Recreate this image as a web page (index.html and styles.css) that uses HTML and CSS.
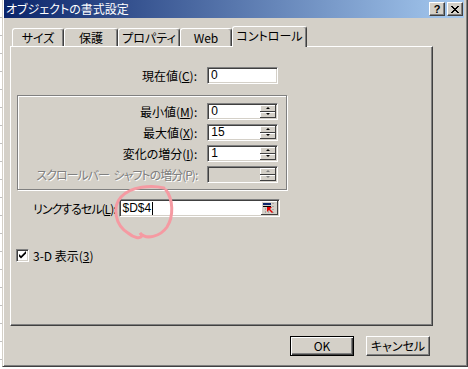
FILE: index.html
```html
<html>
<head>
<title>オブジェクトの書式設定</title>
<meta charset="utf-8">
<link rel="stylesheet" href="styles.css">
</head>
<body>
<div class="desk">
<div class="dialog">
<div class="titlebar">
<span class="title">オブジェクトの書式設定</span>
<span class="tbtn help">?</span>
<span class="tbtn close"><svg width="8" height="7" viewBox="0 0 8 7"><path d="M0 0L7 7M1 0L8 7M7 0L0 7M8 0L1 7" stroke="#000" stroke-width="1"/></svg></span>
</div>
<div class="sheet">
<div class="tabs">
<div class="tab t1">サイズ</div>
<div class="tab t2">保護</div>
<div class="tab t3">プロパティ</div>
<div class="tab t4">Web</div>
<div class="tab active">コントロール</div>
</div>
<div class="panel">
<div class="row top">
<label class="lbl">現在値(<u>C</u>):</label>
<div class="field"><span class="val">0</span></div>
</div>
<div class="group">
<div class="row">
<label class="lbl">最小値(<u>M</u>):</label>
<div class="field"><span class="val">0</span><span class="spin"><span class="sb"><i class="up"></i></span><span class="sb"><i class="dn"></i></span></span></div>
</div>
<div class="row">
<label class="lbl">最大値(<u>X</u>):</label>
<div class="field"><span class="val">15</span><span class="spin"><span class="sb"><i class="up"></i></span><span class="sb"><i class="dn"></i></span></span></div>
</div>
<div class="row">
<label class="lbl">変化の増分(<u>I</u>):</label>
<div class="field"><span class="val">1</span><span class="spin"><span class="sb"><i class="up"></i></span><span class="sb"><i class="dn"></i></span></span></div>
</div>
<div class="row">
<label class="lbl off">スクロールバー シャフトの増分(P):</label>
<div class="field disabled"><span class="val"></span><span class="spin"><span class="sb"><i class="up"></i></span><span class="sb"><i class="dn"></i></span></span></div>
</div>
</div>
<div class="row link">
<label class="lbl2 tight">リンクするセル(<u>L</u>):</label>
<div class="field wide"><span class="val">$D$4<b class="caret"></b></span><span class="refbtn"><svg width="13" height="11" viewBox="0 0 13 11"><rect x="1" y="1" width="8" height="2" fill="#0a246a"/><rect x="1" y="4" width="8" height="1" fill="#000"/><path d="M11 1v1M11 4v1M11 7v1M11 10v1M3 7h1M3 10h1M6 10h1" stroke="#808080"/><path d="M5 5l5 0-2 2 3 3-1 1-3-3-2 2z" fill="#e00000"/></svg></span></div>
</div>
<div class="row check">
<span class="cbox"><svg width="9" height="9" viewBox="0 0 9 9"><path d="M1 3l2 2 5-5v2.5l-5 5-2-2z" fill="#000"/></svg></span>
<label class="lbl2">3-D 表示(<u>3</u>)</label>
</div>
</div>
<div class="actions">
<div class="btn def">OK</div>
<div class="btn">キャンセル</div>
</div>
</div>
</div>
<svg class="scribble" width="468" height="369" viewBox="0 0 468 369"><path d="M164 188C152 185 131 186 121 197C112 207 115 225 128 233C134 238 140 239 142 236L140 233C146 240 160 237 167 227C174 216 173 199 166 190" fill="none" stroke="#f59aa2" stroke-width="3" stroke-linecap="round"/></svg>
</div>
</body>
</html>
```
FILE: styles.css
```css
body{margin:0;background:#fff;font-family:"Noto Sans CJK JP","Liberation Sans",sans-serif;font-size:12px;font-feature-settings:"palt";color:#000;}
.desk{position:relative;width:468px;height:369px;overflow:hidden;background:repeating-linear-gradient(180deg,#fff 0,#fff 17px,#c0c0c0 17px,#c0c0c0 18px);}
.dialog{width:466px;height:367px;margin-left:2px;box-sizing:border-box;background:#d4d0c8;border-style:solid;border-width:0 1px 1px 1px;border-color:#d4d0c8 #404040 #404040 #d4d0c8;box-shadow:inset 1px 0 #fff,inset -1px -1px #808080;padding:0 3px 0 1px;}
.titlebar{height:18px;display:flex;align-items:center;background:linear-gradient(90deg,#0a246a 0%,#a6caf0 100%);}
.title{flex:1;color:#fff;padding-left:2px;line-height:18px;}
.tbtn{width:16px;height:14px;box-sizing:border-box;background:#d4d0c8;border:1px solid;border-color:#fff #404040 #404040 #fff;box-shadow:inset -1px -1px #808080;display:flex;align-items:center;justify-content:center;}
.help{margin-right:2px;font:bold 11px "Liberation Sans",sans-serif;}
.close{margin-right:1px;}
.sheet{padding:8px 0 0 6px;}
.tabs{display:flex;align-items:flex-end;height:20px;padding-left:2px;}
.tab{height:18px;box-sizing:border-box;border-top:1px solid #fff;border-left:1px solid #fff;border-right:1px solid #404040;box-shadow:inset -1px 0 #808080;border-radius:3px 3px 0 0;text-align:center;line-height:17px;}
.t1{width:52px;}
.t2{width:54px;}
.t3{width:62px;}
.t4{width:52px;}
.tab.active{width:75px;height:21px;margin-bottom:-1px;position:relative;z-index:1;background:#d4d0c8;line-height:18px;}
.panel{width:423px;height:280px;box-sizing:border-box;border:1px solid;border-color:#fff #404040 #404040 #fff;box-shadow:inset -1px -1px #808080;padding-top:20px;}
.row{display:flex;align-items:center;height:17px;}
.lbl{text-align:right;white-space:pre;margin-right:10px;}
.top .lbl{width:186px;}
.group .lbl{width:179px;}
.off{color:#808080;text-shadow:1px 1px #fff;letter-spacing:-1px;word-spacing:3px;}
.field{width:71px;height:17px;box-sizing:border-box;display:flex;background:#fff;border:1px solid;border-color:#808080 #fff #fff #808080;box-shadow:inset 1px 1px #404040,inset -1px -1px #d4d0c8;padding:1px;}
.val{flex:1;padding-left:2px;line-height:13px;display:flex;align-items:center;font-family:"Liberation Sans",sans-serif;}
.spin{width:16px;display:flex;flex-direction:column;}
.sb{flex:1;background:#d4d0c8;border-right:1px solid #404040;border-bottom:1px solid #404040;box-shadow:inset 1px 1px #fff;display:flex;align-items:center;justify-content:center;}
.sb i{width:0;height:0;border-left:2px solid transparent;border-right:2px solid transparent;}
.sb .up{border-bottom:2px solid #000;}
.sb .dn{border-top:2px solid #000;}
.disabled{background:#d4d0c8;}
.disabled .sb .up{border-bottom-color:#808080;}
.disabled .sb .dn{border-top-color:#808080;}
.group{width:270px;height:95px;box-sizing:border-box;margin:11px 0 0 6px;border:1px solid #808080;box-shadow:inset 1px 1px #fff,1px 1px #fff;padding:7px 8px 0 1px;display:flex;flex-direction:column;gap:4px;}
.link{margin-top:9px;padding-left:22px;height:18px;}
.lbl2{margin-right:3px;white-space:nowrap;}
.tight{letter-spacing:-1px;}
.wide{width:161px;height:18px;}
.caret{display:inline-block;width:1px;height:13px;background:#000;margin-left:1px;}
.refbtn{width:17px;height:14px;box-sizing:border-box;background:#d4d0c8;border-right:1px solid #404040;border-bottom:1px solid #404040;box-shadow:inset 1px 1px #fff;display:flex;align-items:center;justify-content:center;}
.check{margin-top:32px;padding-left:5px;height:13px;}
.cbox{width:13px;height:13px;box-sizing:border-box;background:#fff;border:1px solid;border-color:#808080 #fff #fff #808080;box-shadow:inset 1px 1px #404040,inset -1px -1px #d4d0c8;display:flex;align-items:center;justify-content:center;margin-right:4px;}
.actions{display:flex;justify-content:flex-end;gap:12px;padding:10px 3px 0 0;width:423px;box-sizing:border-box;}
.btn{width:64px;height:20px;box-sizing:border-box;background:#d4d0c8;border:1px solid;border-color:#fff #404040 #404040 #fff;box-shadow:inset -1px -1px #808080;text-align:center;line-height:18px;}
.btn.def{border-color:#000;box-shadow:inset 1px 1px #fff,inset -1px -1px #404040,inset -2px -2px #808080;}
.scribble{position:absolute;left:0;top:0;pointer-events:none;}
```
